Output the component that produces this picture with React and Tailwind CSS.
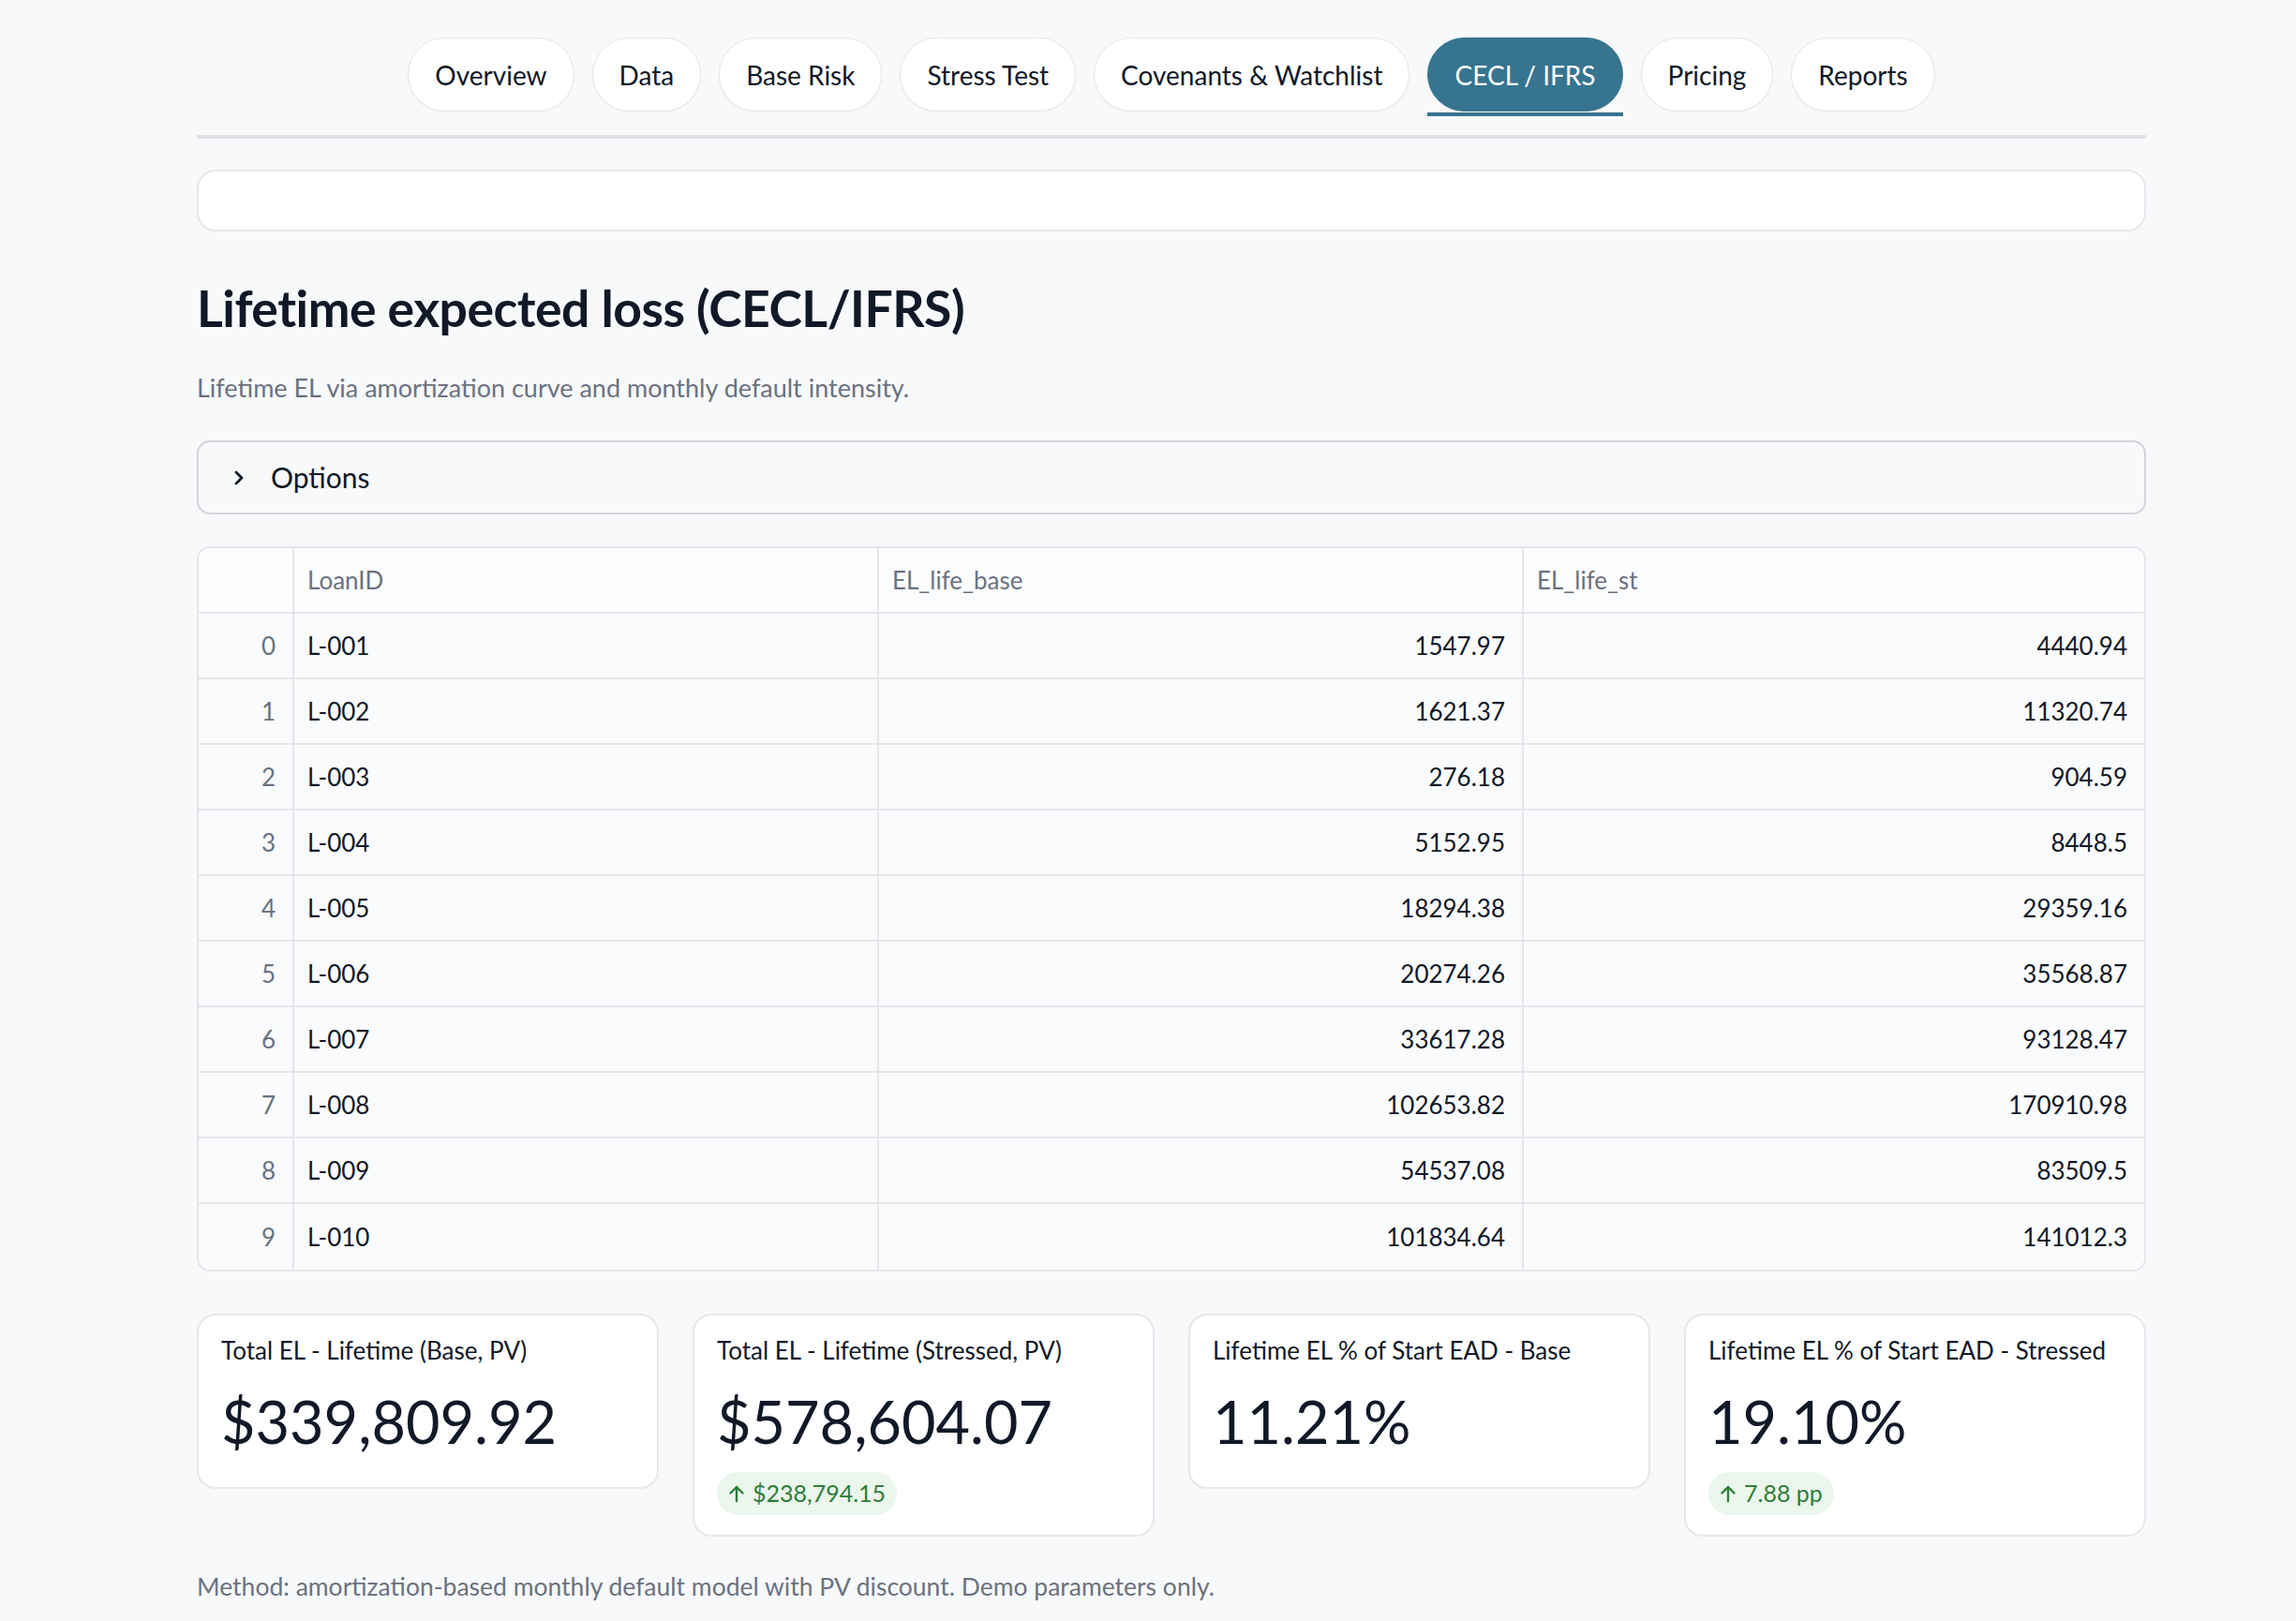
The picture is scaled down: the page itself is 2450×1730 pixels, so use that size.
import React from 'react';

const tabs = [
  'Overview',
  'Data',
  'Base Risk',
  'Stress Test',
  'Covenants & Watchlist',
  'CECL / IFRS',
  'Pricing',
  'Reports',
];

const rows = [
  ['L-001', '1547.97', '4440.94'],
  ['L-002', '1621.37', '11320.74'],
  ['L-003', '276.18', '904.59'],
  ['L-004', '5152.95', '8448.5'],
  ['L-005', '18294.38', '29359.16'],
  ['L-006', '20274.26', '35568.87'],
  ['L-007', '33617.28', '93128.47'],
  ['L-008', '102653.82', '170910.98'],
  ['L-009', '54537.08', '83509.5'],
  ['L-010', '101834.64', '141012.3'],
];

const metrics = [
  { label: 'Total EL - Lifetime (Base, PV)', value: '$339,809.92' },
  {
    label: 'Total EL - Lifetime (Stressed, PV)',
    value: '$578,604.07',
    delta: '$238,794.15',
  },
  { label: 'Lifetime EL % of Start EAD - Base', value: '11.21%' },
  {
    label: 'Lifetime EL % of Start EAD - Stressed',
    value: '19.10%',
    delta: '7.88 pp',
  },
];

function TabBar() {
  return (
    <div className="flex justify-center gap-[19px] pt-[40px]">
      {tabs.map((t) => {
        const active = t === 'CECL / IFRS';
        return (
          <div key={t} className="flex flex-col">
            <div
              className={
                'h-[79px] flex items-center px-[28px] rounded-full text-[28px] border ' +
                (active
                  ? 'bg-[#37748f] border-[#37748f] text-white'
                  : 'bg-white border-[#e4e6ea] text-[#111827] shadow-[0_1px_2px_rgba(0,0,0,0.04)]')
              }
            >
              {t}
            </div>
            <div
              className={
                'h-[4px] mt-[1px] ' + (active ? 'bg-[#37748f]' : 'bg-transparent')
              }
            />
          </div>
        );
      })}
    </div>
  );
}

function ArrowUp() {
  return (
    <svg
      width="18"
      height="20"
      viewBox="0 0 18 20"
      fill="none"
      stroke="currentColor"
      strokeWidth="2.4"
      strokeLinecap="round"
      strokeLinejoin="round"
    >
      <path d="M9 18V3" />
      <path d="M2.5 9.5L9 3l6.5 6.5" />
    </svg>
  );
}

function Metric({ label, value, delta }) {
  return (
    <div className="bg-white border-2 border-[#e6e8ec] rounded-[20px] pl-[24px] pr-[20px] pt-[19px] pb-[21px]">
      <div className="text-[26px] leading-[36px] text-[#111827]">{label}</div>
      <div className="text-[63px] leading-[99px] mt-[8px] text-[#111827]">
        {value}
      </div>
      {delta ? (
        <div className="mt-[5px] inline-flex items-center gap-[8px] h-[46px] px-[12px] rounded-full bg-[#ebf6ec] text-[#2f7d3a] text-[25px]">
          <ArrowUp />
          <span>{delta}</span>
        </div>
      ) : null}
    </div>
  );
}

export default function App() {
  return (
    <div
      className="min-h-screen bg-[#f8f9fb] text-[#111827]"
      style={{ fontFamily: 'Lato, "Noto Sans", sans-serif' }}
    >
      <div className="ml-[210px] w-[2080px] pb-[30px]">
        <TabBar />
        <div className="h-[4px] bg-[#e1e3e7] mt-[20px]" />

        <div className="mt-[33px] h-[66px] bg-white border-2 border-[#e6e8ec] rounded-[20px]" />

        <h2 className="mt-[49px] text-[53.5px] leading-[64px] font-bold tracking-[-0.5px]">
          Lifetime expected loss (CECL/IFRS)
        </h2>
        <p className="mt-[36px] text-[27px] leading-[36px] text-[#6b7280]">
          Lifetime EL via amortization curve and monthly default intensity.
        </p>

        <div className="mt-[38px] h-[79px] flex items-center border-2 border-[#d3d5da] rounded-[14px] pl-[36px]">
          <svg
            width="14"
            height="20"
            viewBox="0 0 14 20"
            fill="none"
            stroke="#111827"
            strokeWidth="2.8"
            strokeLinecap="round"
            strokeLinejoin="round"
          >
            <path d="M4 4l6 6-6 6" />
          </svg>
          <span className="ml-[27px] text-[30px]">Options</span>
        </div>

        <div className="mt-[34px] border-2 border-[#e4e6ea] rounded-[14px] overflow-hidden bg-[#fafbfc]">
          <div className="grid grid-cols-[102px_624px_688px_1fr] h-[70px] bg-[#fcfdfe] border-b-2 border-[#e4e6ea] text-[26px] text-[#6b7280]">
            <div className="border-r-2 border-[#e4e6ea]" />
            <div className="flex items-center pl-[14px] border-r-2 border-[#e4e6ea]">LoanID</div>
            <div className="flex items-center pl-[14px] border-r-2 border-[#e4e6ea]">EL_life_base</div>
            <div className="flex items-center pl-[14px]">EL_life_st</div>
          </div>
          {rows.map((r, i) => (
            <div
              key={r[0]}
              className={
                'grid grid-cols-[102px_624px_688px_1fr] h-[70px] text-[26px] ' +
                (i < rows.length - 1 ? 'border-b-2 border-[#e4e6ea]' : '')
              }
            >
              <div className="flex items-center justify-end pr-[18px] text-[#6b7280] border-r-2 border-[#e4e6ea]">
                {i}
              </div>
              <div className="flex items-center pl-[14px] border-r-2 border-[#e4e6ea]">{r[0]}</div>
              <div className="flex items-center justify-end pr-[18px] border-r-2 border-[#e4e6ea]">
                {r[1]}
              </div>
              <div className="flex items-center justify-end pr-[18px]">{r[2]}</div>
            </div>
          ))}
        </div>

        <div className="mt-[45px] grid grid-cols-4 gap-[36px] items-start">
          {metrics.map((m) => (
            <Metric key={m.label} {...m} />
          ))}
        </div>

        <p className="mt-[35px] text-[26.5px] leading-[36px] text-[#6b7280]">
          Method: amortization-based monthly default model with PV discount. Demo parameters only.
        </p>
      </div>
    </div>
  );
}
